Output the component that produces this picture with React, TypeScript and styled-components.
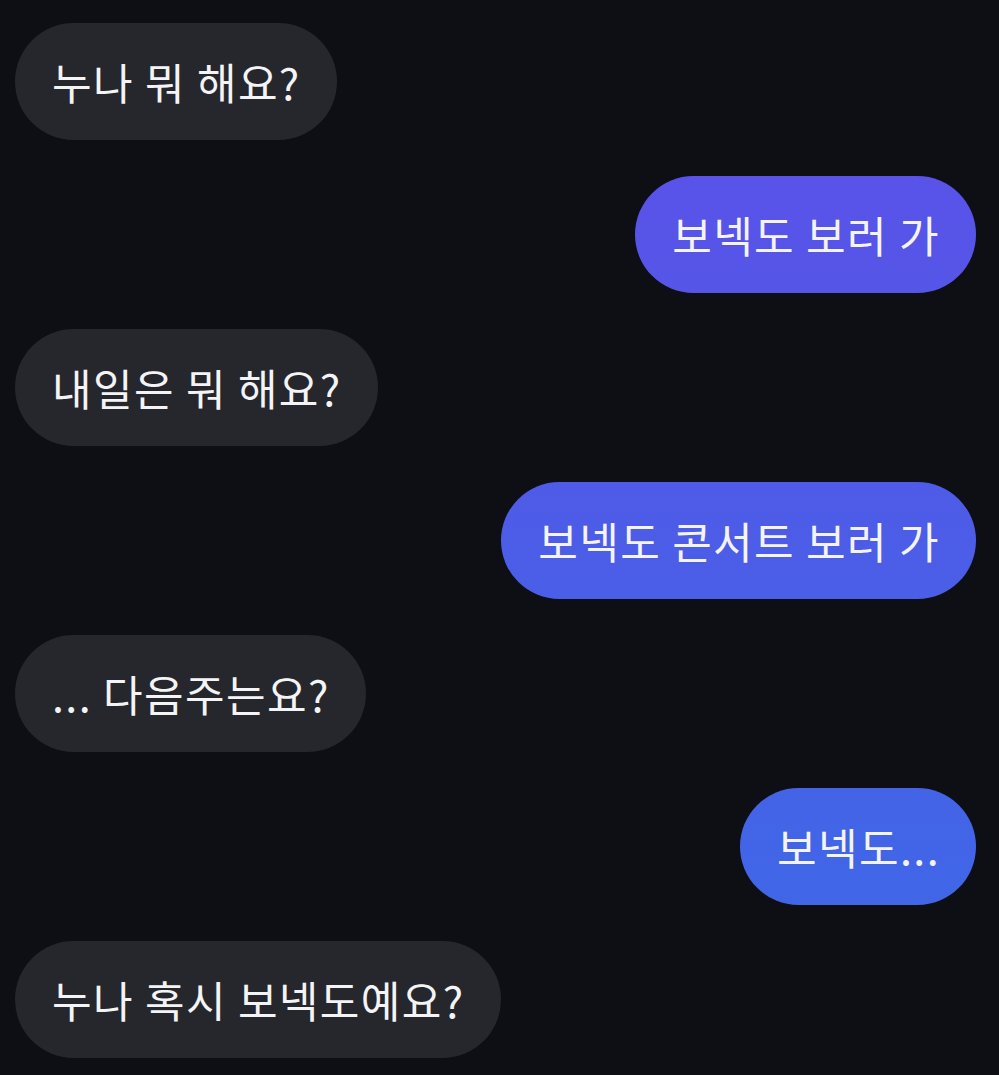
import React from "react";
import styled, { createGlobalStyle, css } from "styled-components";

const Global = createGlobalStyle`
  html, body {
    margin: 0;
    padding: 0;
    background: #0d0f14;
  }
  body {
    font-family: "Noto Sans CJK KR", "Noto Sans", sans-serif;
    -webkit-font-smoothing: antialiased;
  }
`;

const Thread = styled.div`
  min-height: 1075px;
  box-sizing: border-box;
  background: #0d0f14;
  padding: 23px 23px 0 15px;
  display: flex;
  flex-direction: column;
  gap: 36px;
`;

const Row = styled.div<{ $mine?: boolean }>`
  display: flex;
  justify-content: ${(p) => (p.$mine ? "flex-end" : "flex-start")};
`;

const Bubble = styled.div<{ $mine?: boolean }>`
  height: 117px;
  box-sizing: border-box;
  display: flex;
  align-items: center;
  padding: 0 36px 2px 37px;
  border-radius: 59px;
  color: #f4f4f6;
  font-size: 43px;
  font-weight: 400;
  letter-spacing: 1.4px;
  white-space: nowrap;
  ${(p) =>
    p.$mine
      ? css`
          background-image: linear-gradient(180deg, #5f4ee9 0px, #3a6be6 1075px);
          background-attachment: fixed;
        `
      : css`
          background: #25272c;
        `}
`;

const messages: { text: string; mine?: boolean }[] = [
  { text: "누나 뭐 해요?" },
  { text: "보넥도 보러 가", mine: true },
  { text: "내일은 뭐 해요?" },
  { text: "보넥도 콘서트 보러 가", mine: true },
  { text: "... 다음주는요?" },
  { text: "보넥도...", mine: true },
  { text: "누나 혹시 보넥도예요?" },
];

export default function App() {
  return (
    <>
      <Global />
      <Thread>
        {messages.map((m, i) => (
          <Row key={i} $mine={m.mine}>
            <Bubble $mine={m.mine}>{m.text}</Bubble>
          </Row>
        ))}
      </Thread>
    </>
  );
}
